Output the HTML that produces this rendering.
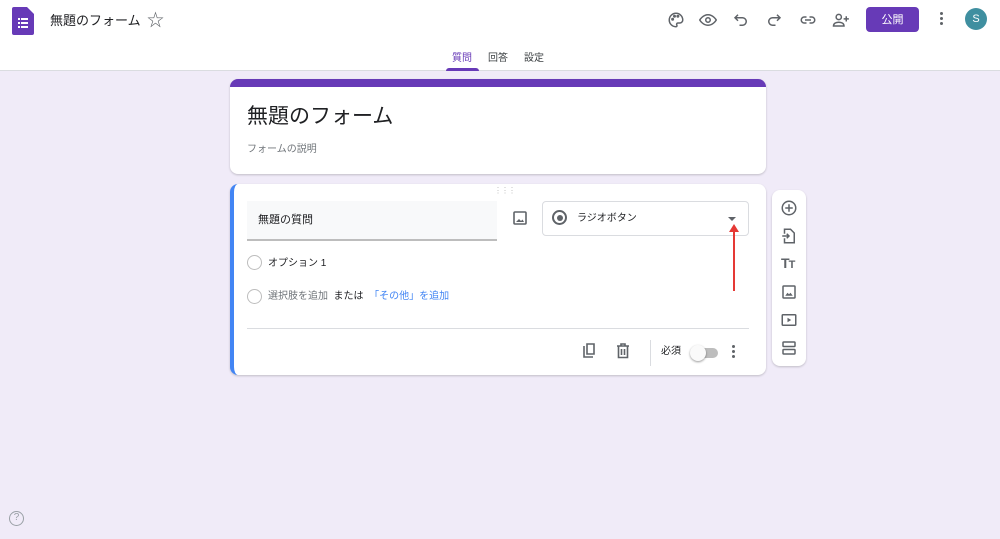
<!DOCTYPE html>
<html><head><meta charset="utf-8"><style>
*{box-sizing:border-box;margin:0;padding:0}
body{width:1000px;height:539px;overflow:hidden;background:#f0ebf8;font-family:"Liberation Sans","Noto Sans CJK JP",sans-serif;position:relative;color:#202124}
.hdr{position:absolute;left:0;top:0;width:1000px;height:71px;background:#fff;border-bottom:1px solid #dadce0}
.abs{position:absolute;line-height:1.2}
svg.i{position:absolute;width:18px;height:18px;fill:none;stroke:#5f6368;stroke-width:2}
.card{position:absolute;background:#fff;border-radius:8px;box-shadow:0 1px 2px rgba(0,0,0,.2)}
</style></head><body>
<div class="hdr">
  <svg class="abs" style="left:12px;top:7px" width="22" height="28" viewBox="0 0 22 28"><path d="M2 0h13l7 7v19a2 2 0 0 1-2 2H2a2 2 0 0 1-2-2V2a2 2 0 0 1 2-2z" fill="#673ab7"/><g fill="#fff"><rect x="6" y="11" width="2" height="2"/><rect x="9" y="11" width="7" height="2"/><rect x="6" y="15" width="2" height="2"/><rect x="9" y="15" width="7" height="2"/><rect x="6" y="19" width="2" height="2"/><rect x="9" y="19" width="7" height="2"/></g></svg>
  <div class="abs" style="left:50px;top:13px;font-size:13px;color:#202124">無題のフォーム</div>
  <div class="abs" style="left:147px;top:11px;font-size:17px;color:#5f6368">☆</div>
  <svg class="i" style="left:667px;top:11px" viewBox="0 0 24 24"><path d="M12 3a9 9 0 0 0 0 18c1.5 0 1.5-1.5 1-2.5s0-2.5 1.5-2.5H17a4 4 0 0 0 4-4c0-5-4-9-9-9z"/><circle cx="7.5" cy="11" r="1" fill="#5f6368"/><circle cx="10" cy="7" r="1" fill="#5f6368"/><circle cx="14.5" cy="7" r="1" fill="#5f6368"/></svg>
  <svg class="i" style="left:699px;top:11px" viewBox="0 0 24 24"><path d="M1 12s4-7 11-7 11 7 11 7-4 7-11 7S1 12 1 12z"/><circle cx="12" cy="12" r="3"/></svg>
  <svg class="i" style="left:732px;top:11px" viewBox="0 0 24 24"><path d="M8 5L4 9l4 4M4 9h10a5 5 0 0 1 0 10h-4"/></svg>
  <svg class="i" style="left:765px;top:11px" viewBox="0 0 24 24"><path d="M16 5l4 4-4 4M20 9H10a5 5 0 0 0 0 10h4"/></svg>
  <svg class="i" style="left:799px;top:11px" viewBox="0 0 24 24"><path d="M10 8H7a4 4 0 0 0 0 8h3M14 8h3a4 4 0 0 1 0 8h-3M8 12h8"/></svg>
  <svg class="i" style="left:832px;top:11px" viewBox="0 0 24 24"><circle cx="9" cy="8" r="3.5"/><path d="M2 20c0-4 4-5 7-5s7 1 7 5zM19 7v7M15.5 10.5h7"/></svg>
  <div class="abs" style="left:866px;top:7px;width:53px;height:25px;background:#673ab7;border-radius:4px;color:#fff;font-size:11px;text-align:center;padding-top:7px">公開</div>
  <div class="abs" style="left:940px;top:12px;width:4px">
    <div style="width:3px;height:3px;background:#5f6368;border-radius:50%;margin-bottom:2px"></div>
    <div style="width:3px;height:3px;background:#5f6368;border-radius:50%;margin-bottom:2px"></div>
    <div style="width:3px;height:3px;background:#5f6368;border-radius:50%"></div>
  </div>
  <div class="abs" style="left:965px;top:8px;width:22px;height:22px;border-radius:50%;background:#3f8fa0;color:#fff;font-size:11px;text-align:center;padding-top:5px">S</div>
  <div class="abs" style="left:452px;top:53px;font-size:10px;color:#673ab7">質問</div>
  <div class="abs" style="left:488px;top:53px;font-size:10px;color:#3c4043">回答</div>
  <div class="abs" style="left:524px;top:53px;font-size:10px;color:#3c4043">設定</div>
  <div class="abs" style="left:446px;top:68px;width:33px;height:3px;background:#673ab7;border-radius:3px 3px 0 0"></div>
</div>

<div class="card" style="left:230px;top:79px;width:536px;height:95px;border-top:8px solid #673ab7">
  <div class="abs" style="left:17px;top:17px;font-size:21px;color:#202124">無題のフォーム</div>
  <div class="abs" style="left:17px;top:57px;font-size:10px;color:#70757a">フォームの説明</div>
</div>

<div class="card" style="left:230px;top:184px;width:536px;height:191px;border-left:4px solid #4285f4">
  <div class="abs" style="left:260px;top:2px;font-size:8px;color:#bbb;letter-spacing:-1px">⋮⋮⋮</div>
  <div class="abs" style="left:13px;top:17px;width:250px;height:40px;background:#f8f9fa;border-bottom:2px solid #bdbdbd"></div>
  <div class="abs" style="left:24px;top:30px;font-size:11px;color:#202124">無題の質問</div>
  <svg class="abs" style="left:279px;top:27px" width="14" height="14" viewBox="0 0 14 14"><rect x="1" y="1" width="12" height="12" rx="1" fill="none" stroke="#5f6368" stroke-width="1.6"/><path d="M3 11l3-3 2 2 1.5-1.5L11 11z" fill="#5f6368"/></svg>
  <div class="abs" style="left:308px;top:17px;width:207px;height:35px;border:1px solid #dadce0;border-radius:4px"></div>
  <div class="abs" style="left:318px;top:26px;width:15px;height:15px;border:2px solid #5f6368;border-radius:50%"><div style="margin:2.5px;width:6px;height:6px;background:#5f6368;border-radius:50%"></div></div>
  <div class="abs" style="left:343px;top:29px;font-size:10px;color:#202124">ラジオボタン</div>
  <div class="abs" style="left:494px;top:33px;width:0;height:0;border-left:4px solid transparent;border-right:4px solid transparent;border-top:4px solid #5f6368"></div>
  <div class="abs" style="left:499px;top:43px;width:2px;height:64px;background:#e53935"></div>
  <div class="abs" style="left:495px;top:40px;width:0;height:0;border-left:5px solid transparent;border-right:5px solid transparent;border-bottom:8px solid #e53935"></div>
  <div class="abs" style="left:13px;top:71px;width:15px;height:15px;border:1.5px solid #bdbdbd;border-radius:50%"></div>
  <div class="abs" style="left:34px;top:74px;font-size:10px;color:#202124">オプション 1</div>
  <div class="abs" style="left:13px;top:105px;width:15px;height:15px;border:1.5px solid #bdbdbd;border-radius:50%"></div>
  <div class="abs" style="left:34px;top:107px;font-size:10px;color:#70757a;white-space:nowrap">選択肢を追加 <span style="color:#202124">&nbsp;または&nbsp;</span> <span style="color:#4285f4">「その他」を追加</span></div>
  <div class="abs" style="left:13px;top:144px;width:502px;height:1px;background:#dadce0"></div>
  <svg class="abs" style="left:348px;top:159px" width="14" height="16" viewBox="0 0 14 16"><path d="M2 3v11h9M5 1h7v10H5z" fill="none" stroke="#5f6368" stroke-width="1.6"/></svg>
  <svg class="abs" style="left:382px;top:159px" width="14" height="16" viewBox="0 0 14 16"><path d="M1 3h12M5 3V1h4v2M2.5 3v11.5h9V3M5.5 6v6M8.5 6v6" fill="none" stroke="#5f6368" stroke-width="1.6"/></svg>
  <div class="abs" style="left:416px;top:156px;width:1px;height:26px;background:#dadce0"></div>
  <div class="abs" style="left:427px;top:162px;font-size:10px;color:#202124">必須</div>
  <div class="abs" style="left:460px;top:164px;width:24px;height:10px;background:#bdbdbd;border-radius:5px"></div>
  <div class="abs" style="left:456px;top:161px;width:16px;height:16px;background:#fafafa;border-radius:50%;box-shadow:0 1px 2px rgba(0,0,0,.4)"></div>
  <div class="abs" style="left:498px;top:161px">
    <div style="width:3px;height:3px;background:#5f6368;border-radius:50%;margin-bottom:2px"></div>
    <div style="width:3px;height:3px;background:#5f6368;border-radius:50%;margin-bottom:2px"></div>
    <div style="width:3px;height:3px;background:#5f6368;border-radius:50%"></div>
  </div>
</div>

<div class="card" style="left:772px;top:190px;width:34px;height:176px">
  <svg class="i" style="left:8px;top:9px" viewBox="0 0 24 24"><circle cx="12" cy="12" r="9"/><path d="M12 7v10M7 12h10"/></svg>
  <svg class="i" style="left:8px;top:37px" viewBox="0 0 24 24"><path d="M6 9V3h8l5 5v13H6v-6M3 12h9M9 9l3 3-3 3"/></svg>
  <div class="abs" style="left:9px;top:65px;font-size:14px;font-weight:bold;color:#5f6368;letter-spacing:-1px">T<span style="font-size:11px">T</span></div>
  <svg class="i" style="left:8px;top:93px" viewBox="0 0 24 24"><rect x="4" y="4" width="16" height="16" rx="1"/><path d="M7 17l3-4 2 2 2-2 3 4z" fill="#5f6368" stroke="none"/></svg>
  <svg class="i" style="left:8px;top:121px" viewBox="0 0 24 24"><rect x="3" y="5" width="18" height="14" rx="1"/><path d="M10 9v6l5-3z" fill="#5f6368" stroke="none"/></svg>
  <svg class="i" style="left:8px;top:149px" viewBox="0 0 24 24"><rect x="4" y="4" width="16" height="6" rx="1"/><rect x="4" y="14" width="16" height="6" rx="1"/></svg>
</div>

<div class="abs" style="left:9px;top:511px;width:15px;height:15px;border:1.5px solid #9aa0a6;border-radius:50%;color:#9aa0a6;font-size:10px;text-align:center;padding-top:0">?</div>
</body></html>
